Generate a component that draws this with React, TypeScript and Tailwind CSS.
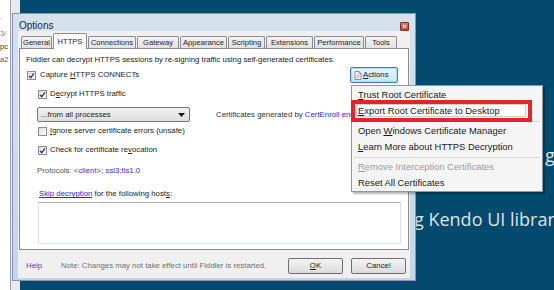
import type { ReactNode } from 'react';

const TABS = [
  { label: 'General', w: 'w-[31px]' },
  { label: 'HTTPS', w: 'w-[34px]', active: true },
  { label: 'Connections', w: 'w-[48px]' },
  { label: 'Gateway', w: 'w-[42px]' },
  { label: 'Appearance', w: 'w-[47px]' },
  { label: 'Scripting', w: 'w-[37px]' },
  { label: 'Extensions', w: 'w-[47px]' },
  { label: 'Performance', w: 'w-[50px]' },
  { label: 'Tools', w: 'w-[32px]' },
];

function U({ children }: { children: ReactNode }) {
  return <span className="underline underline-offset-[1px]">{children}</span>;
}

function Check({ checked }: { checked?: boolean }) {
  return (
    <span className="flex h-[9px] w-[9px] shrink-0 items-center justify-center border border-[#8e8f8f] bg-linear-to-br from-[#dcdcdc] to-white">
      {checked && (
        <svg viewBox="0 0 7 7" className="h-[7px] w-[7px]">
          <path d="M1 3.9 2.8 5.6 6 1.3" fill="none" stroke="#263f78" strokeWidth="1.4" />
        </svg>
      )}
    </span>
  );
}

function WinButton({ children }: { children: ReactNode }) {
  return (
    <div className="flex h-[16px] w-[55px] items-center justify-center rounded-[2px] border border-[#707070] bg-linear-to-b from-[#f3f3f3] to-[#dcdcdc] text-[7.8px] text-[#1e1e1e]">
      <span>{children}</span>
    </div>
  );
}

function MenuItem({ children, disabled }: { children: ReactNode; disabled?: boolean }) {
  return (
    <div className={`flex h-[16px] items-center pl-[6px] ${disabled ? 'text-[#9d9d9d]' : 'text-[#1b1b1b]'}`}>
      <span className="whitespace-pre">{children}</span>
    </div>
  );
}

export default function App() {
  return (
    <div className="relative h-[290px] w-[554px] overflow-hidden bg-[#034a6e] font-['Liberation_Sans',Arial,sans-serif]">
      {/* window behind, on the left */}
      <div className="absolute left-0 top-0 flex h-full w-[20px] bg-[#e8ebee]">
        <div className="flex w-[10px] flex-col overflow-hidden bg-white pt-[14px] text-[7.5px] leading-[13px]">
          <span className="text-[#b0b0b0]">'</span>
          <span className="text-[#8a8a8a]">3/</span>
          <span className="text-[#333]">pc</span>
          <span className="text-[#555]">a2</span>
        </div>
        <div className="w-px bg-[#9aa1a9]" />
      </div>

      {/* desktop text */}
      <span className="absolute left-[545px] top-[146px] font-['Open_Sans',sans-serif] text-[18px] leading-[18px] text-[#dbe4ea]">
        g
      </span>
      <span className="absolute left-[414px] top-[210px] whitespace-nowrap font-['Open_Sans',sans-serif] text-[18px] leading-[18px] text-[#dbe4ea]">
        g Kendo UI library
      </span>

      {/* Options dialog */}
      <div className="absolute left-[12px] top-[13px] flex h-[268px] w-[404px] flex-col border border-[#8396ab] bg-linear-to-b from-[#d6e1ed] to-[#c6d5e5] px-[5px] pb-[2px]">
        <div className="flex h-[17px] shrink-0 items-start justify-between">
          <span className="mt-[7px] pl-[1px] text-[10px] leading-[10px] text-[#1d2a38]">Options</span>
          <span className="mr-[1px] mt-[8px] flex h-[9px] w-[9px] items-center justify-center rounded-[1px] border border-[#8a2a22] bg-linear-to-b from-[#e2796c] to-[#c23a2c]">
            <svg viewBox="0 0 5 5" className="h-[5px] w-[5px]">
              <path d="M.8.8 4.2 4.2M4.2.8.8 4.2" stroke="#fff" strokeWidth="1.1" />
            </svg>
          </span>
        </div>

        <div className="flex flex-1 flex-col bg-[#f0f0f0] px-px pt-[2px]">
          {/* tabs */}
          <div className="flex h-[15px] items-end gap-px pl-[2px]">
            {TABS.map(t =>
              t.active ? (
                <div
                  key={t.label}
                  className={`${t.w} relative z-10 -mb-px flex h-[16px] items-center justify-center rounded-t-[2px] border border-b-0 border-[#898c95] bg-white text-[7.6px] text-[#1e1e1e]`}
                >
                  {t.label}
                </div>
              ) : (
                <div
                  key={t.label}
                  className={`${t.w} flex h-[12px] items-center justify-center rounded-t-[2px] border border-b-0 border-[#898c95] bg-linear-to-b from-[#f3f3f3] to-[#e1e1e1] text-[7.6px] text-[#1e1e1e]`}
                >
                  {t.label}
                </div>
              )
            )}
          </div>

          {/* tab page */}
          <div className="flex h-[202px] shrink-0 flex-col border border-[#898c95] bg-white text-[7.8px] text-[#222]">
            <div className="mt-[5px] flex h-[12px] items-center pl-[6px]">
              Fiddler can decrypt HTTPS sessions by re-signing traffic using self-generated certificates.
            </div>

            <div className="mt-px flex h-[16px] items-center justify-between pl-[7px] pr-[10px]">
              <div className="flex items-center gap-[4px]">
                <Check checked />
                <span>
                  Capture <U>H</U>TTPS CONNECTs
                </span>
              </div>
              <div className="flex h-[16px] w-[48px] items-center gap-[1px] rounded-[2px] border border-[#3c7fb1] bg-linear-to-b from-[#eaf6fd] to-[#c4e5f6] pl-[3px] shadow-[inset_0_0_0_1px_#a9dcf5]">
                <svg viewBox="0 0 8 9" className="h-[9px] w-[8px] shrink-0">
                  <path d="M1 .5h4l2 2v6H1z" fill="#fbfbfb" stroke="#777" strokeWidth=".8" />
                  <path d="M5 .5v2h2" fill="none" stroke="#777" strokeWidth=".7" />
                  <path d="M2.3 4.3h3.3M2.3 6.2h3.3" stroke="#8a8a8a" strokeWidth=".7" />
                </svg>
                <span>
                  <U>A</U>ctions
                </span>
              </div>
            </div>

            <div className="mt-[4px] flex h-[14px] items-center gap-[3px] pl-[18px]">
              <Check checked />
              <span>
                D<U>e</U>crypt HTTPS traffic
              </span>
            </div>

            <div className="mt-[6px] flex h-[15px] items-center pl-[17px]">
              <div className="flex h-full w-[153px] items-center justify-between rounded-[2px] border border-[#7a7a7a] bg-linear-to-b from-[#f2f2f2] to-[#dedede] pl-[3px] pr-[4px]">
                <span>...from all processes</span>
                <svg viewBox="0 0 7 4" className="h-[4px] w-[7px]">
                  <path d="M0 0h7L3.5 4z" fill="#111" />
                </svg>
              </div>
              <span className="ml-[26px] whitespace-nowrap text-[#333]">
                Certificates generated by <span className="text-[#2d2de0]">CertEnroll engine</span>
              </span>
            </div>

            <div className="mt-[2px] flex h-[14px] items-center gap-[3px] pl-[18px]">
              <Check />
              <span>
                <U>I</U>gnore server certificate errors (unsafe)
              </span>
            </div>

            <div className="mt-[5px] flex h-[14px] items-center gap-[3px] pl-[18px]">
              <Check checked />
              <span>
                Check for certificate re<U>v</U>ocation
              </span>
            </div>

            <div className="mt-[7px] flex h-[14px] items-center pl-[17px] text-[#555]">
              <span>
                Protocols: <span className="text-[#3434e6]">&lt;client&gt;; ssl3;tls1.0</span>
              </span>
            </div>

            <div className="mt-[9px] flex h-[14px] items-center pl-[19px]">
              <span>
                <span className="text-[#2a2ad8] underline underline-offset-[1px]">Skip decryption</span> for the
                following host<U>s</U>:
              </span>
            </div>

            <div className="ml-[18px] mt-px h-[42px] w-[363px] border border-[#abadb3] border-l-[#e2e3ea] border-r-[#dbdfe6] border-b-[#e3e9ef] bg-white" />
          </div>

          {/* footer */}
          <div className="flex h-[28px] shrink-0 items-center pl-[7px] pr-[3px] pt-[4px] text-[7.8px]">
            <span className="text-[#4646d6]">Help</span>
            <span className="ml-[19px] text-[#707070]">Note: Changes may not take effect until Fiddler is restarted.</span>
            <div className="ml-auto flex gap-[8px]">
              <WinButton>
                <U>O</U>K
              </WinButton>
              <WinButton>Cancel</WinButton>
            </div>
          </div>
        </div>
      </div>

      {/* Actions context menu */}
      <div className="absolute left-[351px] top-[85px] flex h-[107px] w-[192px] flex-col border border-[#979797] bg-[#f5f5f5] pt-px text-[9.4px] shadow-[2px_2px_2px_rgba(0,0,0,0.3)]">
        <MenuItem>
          <U>T</U>rust Root Certificate
        </MenuItem>
        <div className="relative flex h-[16px] items-center">
          <div className="absolute left-[4px] top-[1px] h-[13px] w-[170px] border border-[#cfcfcf] bg-white" />
          <span className="relative pl-[6px] text-[#1b1b1b]">
            <U>E</U>xport Root Certificate to Desktop
          </span>
        </div>
        <div className="flex h-[4px] items-center px-[2px]">
          <div className="h-px w-full bg-[#d9d9d9]" />
        </div>
        <MenuItem>
          Open <U>W</U>indows Certificate Manager
        </MenuItem>
        <MenuItem>
          <U>L</U>earn More about HTTPS Decryption
        </MenuItem>
        <div className="flex h-[4px] items-center px-[2px]">
          <div className="h-px w-full bg-[#d9d9d9]" />
        </div>
        <MenuItem disabled>
          <U>R</U>emove Interception Certificates
        </MenuItem>
        <MenuItem>Reset All Certificates</MenuItem>
      </div>

      {/* red annotation box */}
      <div className="absolute left-[351px] top-[100px] h-[22px] w-[181px] border-[4px] border-[#e5232b]" />
    </div>
  );
}
